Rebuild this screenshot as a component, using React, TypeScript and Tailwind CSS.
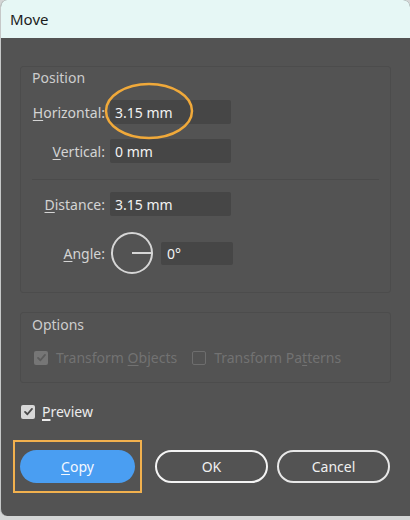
const font = { fontFamily: '"Noto Sans", "Open Sans", sans-serif' };

function Check({ tone }: { tone: "on" | "off" }) {
  const box = tone === "on" ? "bg-[#d8d8d8]" : "bg-[#767676]";
  const mark = tone === "on" ? "#4a4a4a" : "#5c5c5c";
  return (
    <span className={`flex h-[14px] w-[14px] items-center justify-center rounded-[2px] ${box}`}>
      <svg width="11" height="11" viewBox="0 0 12 12" fill="none">
        <path d="M2.2 6.4 4.8 9 9.8 3.2" stroke={mark} strokeWidth="2" strokeLinecap="round" strokeLinejoin="round" />
      </svg>
    </span>
  );
}

function Row({ label, u, value, mt }: { label: string; u: string; value: string; mt: string }) {
  return (
    <div className={`flex items-center ${mt}`}>
      <span className="w-[84px] text-right text-[14px] text-[#d4d4d4]">
        <span className="underline underline-offset-2">{u}</span>
        {label.slice(1)}
      </span>
      <div className="ml-[5px] flex h-[24px] w-[121px] items-center rounded-[2px] bg-[#464646] pl-[5px] text-[14px] text-[#f2f2f2]">
        {value}
      </div>
    </div>
  );
}

export default function App() {
  return (
    <div className="h-[520px] w-[410px] overflow-hidden bg-[#d4d6d6]" style={font}>
      <div className="flex h-[516px] flex-col overflow-hidden rounded-t-[7px] rounded-bl-[7px] border-l border-[#c6c8c8] bg-[#535353]">
        <div className="flex h-[38px] shrink-0 items-center bg-[#e6f7f5] pl-[9px] text-[15px] text-[#1c1c1c]">
          Move
        </div>

        <div className="relative px-[19px] pt-[28px]">
          {/* Position */}
          <div className="relative h-[227px] rounded-[3px] border border-[#4c4c4c]">
            <div className="pl-[11px] pt-[2px] text-[14px] leading-[18px] text-[#cdcdcd]">Position</div>
            <Row label="Horizontal:" u="H" value="3.15 mm" mt="mt-[13px]" />
            <Row label="Vertical:" u="V" value="0 mm" mt="mt-[15px]" />
            <div className="mx-[11px] mt-[16px] h-px bg-[#4b4b4b]" />
            <Row label="Distance:" u="D" value="3.15 mm" mt="mt-[12px]" />
            <div className="mt-[15px] flex items-center">
              <span className="w-[84px] text-right text-[14px] text-[#d4d4d4]">
                <span className="underline underline-offset-2">A</span>ngle:
              </span>
              <svg className="ml-[5px]" width="44" height="44" viewBox="0 0 44 44" fill="none">
                <circle cx="22" cy="22" r="20" stroke="#d6d6d6" strokeWidth="2" />
                <path d="M22 22H42" stroke="#d6d6d6" strokeWidth="2" />
              </svg>
              <div className="ml-[7px] flex h-[23px] w-[72px] items-center rounded-[2px] bg-[#464646] pl-[6px] text-[14px] text-[#f2f2f2]">
                0°
              </div>
            </div>

            <svg
              className="pointer-events-none absolute left-[82px] top-[15px]"
              width="92"
              height="60"
              viewBox="0 0 92 60"
              fill="none"
            >
              <ellipse cx="46" cy="29" rx="43" ry="27" stroke="#f0a93a" strokeWidth="2.5" />
            </svg>
          </div>

          {/* Options */}
          <div className="mt-[19px] h-[71px] rounded-[3px] border border-[#4c4c4c]">
            <div className="pl-[11px] pt-[3px] text-[14px] leading-[18px] text-[#cdcdcd]">Options</div>
            <div className="mt-[13px] flex items-center pl-[13px] text-[14px] text-[#727272]">
              <Check tone="off" />
              <span className="ml-[8px]">
                Transform <span className="underline underline-offset-2">O</span>bjects
              </span>
              <span className="ml-[15px] h-[14px] w-[14px] rounded-[2px] border border-[#6e6e6e]" />
              <span className="ml-[8px]">
                Transform Pa<span className="underline underline-offset-2">t</span>terns
              </span>
            </div>
          </div>

          {/* Preview */}
          <div className="mt-[18px] flex items-center pl-[1px] text-[14px] text-[#ececec]">
            <Check tone="on" />
            <span className="ml-[7px]">
              <span className="underline decoration-2 underline-offset-2">P</span>review
            </span>
          </div>

          {/* Buttons */}
          <div className="mt-[28px] flex items-center">
            <div className="relative">
              <button className="flex h-[33px] w-[115px] items-center justify-center rounded-full bg-[#4a9ef2] text-[14px] text-[#f4f8ff]">
                <span>
                  <span className="underline underline-offset-2">C</span>opy
                </span>
              </button>
              <span className="pointer-events-none absolute -inset-x-[7px] -bottom-[10px] -top-[10px] border-2 border-[#f2b14e]" />
            </div>
            <button className="ml-[20px] flex h-[33px] w-[113px] items-center justify-center rounded-full border-2 border-[#f4f4f4] text-[14px] text-[#f0f0f0]">
              OK
            </button>
            <button className="ml-[9px] flex h-[33px] w-[113px] items-center justify-center rounded-full border-2 border-[#e8e8e8] text-[14px] text-[#f0f0f0]">
              Cancel
            </button>
          </div>
        </div>
      </div>
    </div>
  );
}
